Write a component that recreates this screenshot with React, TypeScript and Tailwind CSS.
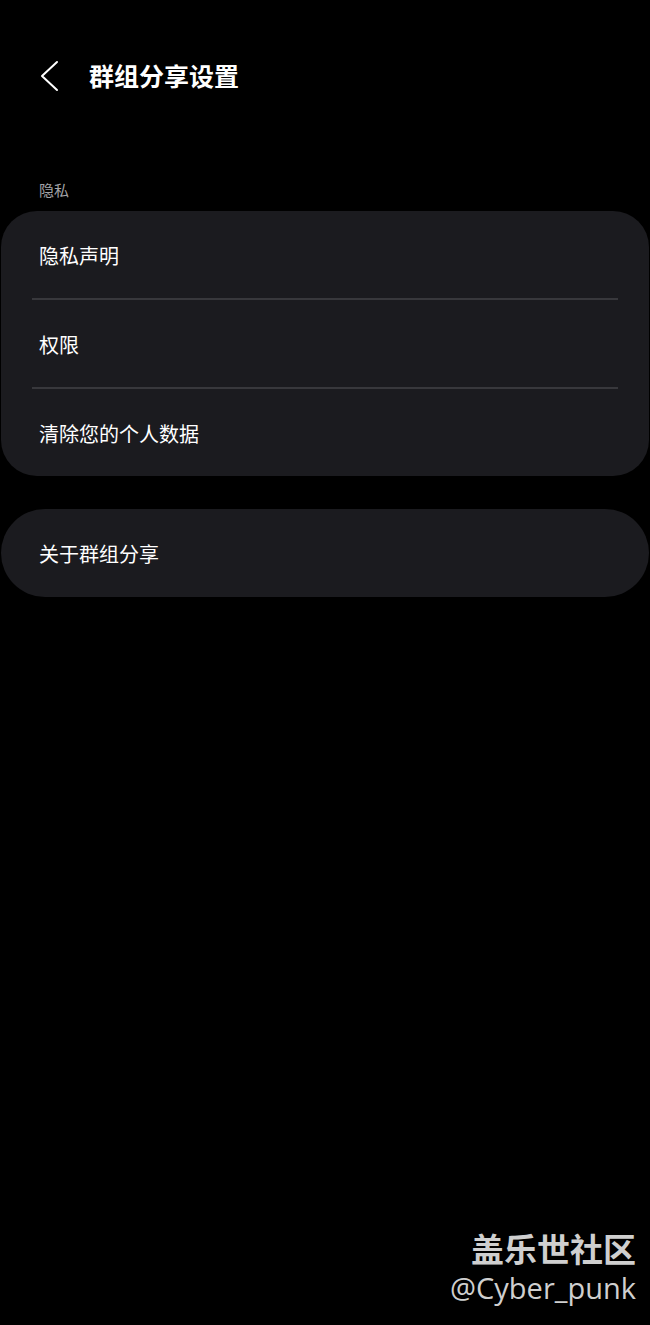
const privacyItems = ["隐私声明", "权限", "清除您的个人数据"];

const font = "font-['Noto_Sans_CJK_SC','Noto_Sans',sans-serif]";

export default function App() {
  return (
    <div className={`relative w-[650px] h-[1325px] bg-black text-white overflow-hidden ${font}`}>
      {/* Header */}
      <header className="flex items-center h-[154px] pl-[39px] items-start pt-[60px]">
        <svg width="20" height="32" viewBox="0 0 20 32" fill="none">
          <polyline points="18,2 3,16 18,30" stroke="white" strokeWidth="2" strokeLinecap="round" strokeLinejoin="round" />
        </svg>
        <h1 className="ml-[30px] -mt-[7px] text-[25px] leading-[44px] font-bold">群组分享设置</h1>
      </header>

      {/* Section label */}
      <div className="px-[39px] h-[57px] pt-[26px] text-[15px] leading-[20px] text-[#a3a3a7]">隐私</div>

      {/* Privacy card */}
      <div className="mx-[1px] rounded-[36px] bg-[#1b1b1f]">
        {privacyItems.map((label, i) => (
          <div key={label}>
            {i > 0 && <div className="mx-[31px] h-[2px] bg-[#38383c]" />}
            <div className="h-[87px] flex items-center px-[38px] pt-[3px] text-[20px]">{label}</div>
          </div>
        ))}
      </div>

      {/* About card */}
      <div className="mx-[1px] mt-[33px] h-[88px] rounded-[44px] bg-[#1b1b1f] flex items-center px-[38px] pt-[2px] text-[20px]">
        关于群组分享
      </div>

      {/* Watermark */}
      <div className="absolute right-[14px] bottom-[18px] flex flex-col items-end text-[#cfcfcf]">
        <div className="text-[33px] leading-[42px] font-bold">盖乐世社区</div>
        <div className="text-[29px] leading-[38px] font-['Open_Sans',sans-serif]">@Cyber_punk</div>
      </div>
    </div>
  );
}
